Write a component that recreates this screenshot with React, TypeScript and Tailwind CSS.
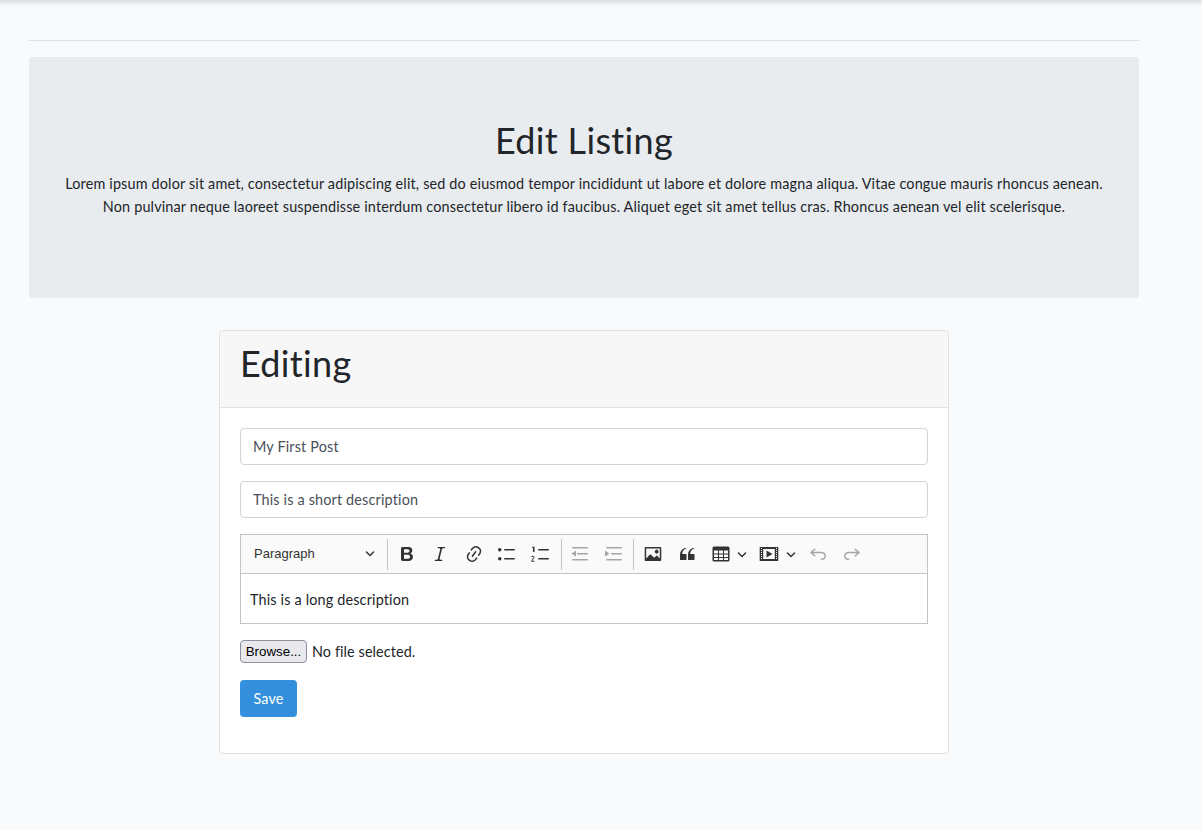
import React from 'react';

const Icon: React.FC<{ d: string; className?: string }> = ({ d, className = 'text-[#333]' }) => (
  <svg viewBox="0 0 20 20" className={`w-5 h-5 fill-current ${className}`}>
    <path d={d} />
  </svg>
);

const Chevron: React.FC = () => (
  <svg viewBox="0 0 10 10" className="w-[10px] h-[10px] fill-current text-[#333]">
    <path d="M.941 4.523a.75.75 0 1 1 1.06-1.06l3.006 3.005 3.005-3.005a.75.75 0 1 1 1.06 1.06l-3.549 3.55a.75.75 0 0 1-1.061 0L.941 4.523z" />
  </svg>
);

const Sep: React.FC<{ className?: string }> = ({ className = 'ml-[3px] mr-[2px]' }) => (
  <span className={`w-px h-[31px] bg-[#c4c4c4] ${className}`} />
);

const Btn: React.FC<{ children: React.ReactNode }> = ({ children }) => (
  <button className="h-[30px] w-[30px] mx-[1.75px] flex items-center justify-center">{children}</button>
);

// button with a dropdown arrow (table, media)
const DropBtn: React.FC<{ children: React.ReactNode; className: string }> = ({ children, className }) => (
  <button className={`h-[30px] mx-[1.75px] flex items-center ${className}`}>
    {children}
    <Chevron />
  </button>
);

const icons = {
  bold: 'M10.187 17H5.773c-.637 0-1.092-.138-1.364-.415-.273-.277-.409-.718-.409-1.323V4.738c0-.617.14-1.062.419-1.332.279-.27.73-.406 1.354-.406h4.68c.69 0 1.288.041 1.793.124.506.083.96.242 1.36.478.341.197.644.447.906.75a3.262 3.262 0 0 1 .808 2.162c0 1.401-.722 2.426-2.167 3.075C15.05 10.175 16 11.315 16 13.01a3.756 3.756 0 0 1-2.296 3.504 6.1 6.1 0 0 1-1.517.377c-.571.073-1.238.11-2 .11zm-.217-6.217H7v4.087h3.069c1.977 0 2.965-.69 2.965-2.072 0-.707-.256-1.22-.768-1.537-.512-.319-1.277-.478-2.296-.478zM7 5.13v3.619h2.606c.729 0 1.292-.067 1.69-.2a1.6 1.6 0 0 0 .91-.765c.165-.267.247-.566.247-.897 0-.707-.26-1.176-.778-1.409-.519-.232-1.31-.348-2.375-.348H7z',
  italic: 'm9.586 14.633.021.004c-.036.335.095.655.393.962.082.083.173.15.274.201h1.474a.6.6 0 1 1 0 1.2H5.304a.6.6 0 0 1 0-1.2h1.15c.474-.07.809-.182 1.005-.334.157-.122.291-.32.404-.597l2.416-9.55a1.053 1.053 0 0 0-.281-.823 1.12 1.12 0 0 0-.442-.296H8.15a.6.6 0 0 1 0-1.2h6.443a.6.6 0 1 1 0 1.2h-1.195c-.376.056-.65.155-.823.296-.215.175-.423.439-.623.79l-2.366 9.347z',
  link: 'm11.077 15 .991-1.416a.75.75 0 1 1 1.229.86l-1.148 1.64a.748.748 0 0 1-.217.206 5.251 5.251 0 0 1-8.503-5.955.741.741 0 0 1 .12-.274l1.147-1.639a.75.75 0 1 1 1.228.86L4.933 10.7l.006.003a3.75 3.75 0 0 0 6.132 4.294l.006.004zm5.494-5.335a.748.748 0 0 1-.12.274l-1.147 1.639a.75.75 0 1 1-1.228-.86l.86-1.23a3.75 3.75 0 0 0-6.144-4.301l-.86 1.229a.75.75 0 0 1-1.229-.86l1.148-1.64a.748.748 0 0 1 .217-.206 5.251 5.251 0 0 1 8.503 5.955zm-4.563-2.532a.75.75 0 0 1 .184 1.045l-3.155 4.505a.75.75 0 1 1-1.229-.86l3.155-4.506a.75.75 0 0 1 1.045-.184z',
  bullets: 'M7 5.75c0 .414.336.75.75.75h9.5a.75.75 0 1 0 0-1.5h-9.5a.75.75 0 0 0-.75.75zm-6 0C1 4.784 1.777 4 2.75 4c.966 0 1.75.777 1.75 1.75 0 .966-.777 1.75-1.75 1.75C1.784 7.5 1 6.723 1 5.75zm6 9c0 .414.336.75.75.75h9.5a.75.75 0 1 0 0-1.5h-9.5a.75.75 0 0 0-.75.75zm-6 0c0-.966.777-1.75 1.75-1.75.966 0 1.75.777 1.75 1.75 0 .966-.777 1.75-1.75 1.75-.966 0-1.75-.777-1.75-1.75z',
  numbers: 'M7 5.75c0 .414.336.75.75.75h9.5a.75.75 0 1 0 0-1.5h-9.5a.75.75 0 0 0-.75.75zM3.5 3v5H2V3.7H1v-1h2.5V3zM.343 17.857l2.59-3.257c2.02-2.523-1.93-4.272-2.76-1.5h1.47c.32-.6 1.3-.183 1 .457L.34 16.5v1.357H3.5v-1H.343zm6.657-3.107c0 .414.336.75.75.75h9.5a.75.75 0 1 0 0-1.5h-9.5a.75.75 0 0 0-.75.75z',
  outdent: 'M2 3.75c0 .414.336.75.75.75h14.5a.75.75 0 1 0 0-1.5H2.75a.75.75 0 0 0-.75.75zm5 6c0 .414.336.75.75.75h9.5a.75.75 0 1 0 0-1.5h-9.5a.75.75 0 0 0-.75.75zM2.75 16.5h14.5a.75.75 0 1 0 0-1.5H2.75a.75.75 0 1 0 0 1.5zM5.388 6.95 2 9.358a.4.4 0 0 0 .013.661l3.39 2.207A.4.4 0 0 0 6 11.892V7.275a.4.4 0 0 0-.612-.326z',
  indent: 'M2 3.75c0 .414.336.75.75.75h14.5a.75.75 0 1 0 0-1.5H2.75a.75.75 0 0 0-.75.75zm5 6c0 .414.336.75.75.75h9.5a.75.75 0 1 0 0-1.5h-9.5a.75.75 0 0 0-.75.75zM2.75 16.5h14.5a.75.75 0 1 0 0-1.5H2.75a.75.75 0 1 0 0 1.5zM1.632 6.95 5.02 9.358a.4.4 0 0 1-.013.661l-3.39 2.207A.4.4 0 0 1 1 11.892V7.275a.4.4 0 0 1 .632-.326z',
  image: 'M6.91 10.54c.26-.23.64-.21.88.03l3.36 3.14 2.23-2.06a.64.64 0 0 1 .87 0l2.52 2.97V4.5H3.2v10.12l3.71-4.08zm10.27-7.51c.6 0 1.09.47 1.09 1.05v11.84c0 .59-.49 1.06-1.09 1.06H2.79c-.6 0-1.09-.47-1.09-1.06V4.08c0-.58.49-1.05 1.1-1.05h14.38zm-5.22 5.56a1.96 1.96 0 1 1 3.4-1.96 1.96 1.96 0 0 1-3.4 1.96z',
  quote: 'M3 10.423a6.5 6.5 0 0 1 6.056-6.408l.038.67C6.448 5.423 5.354 7.663 5.22 10H9c.552 0 .5.432.5.986v4.511c0 .554-.448.503-1 .503h-5c-.552 0-.5-.449-.5-1.003v-4.574zm8 0a6.5 6.5 0 0 1 6.056-6.408l.038.67c-2.646.739-3.74 2.979-3.873 5.315H17c.552 0 .5.432.5.986v4.511c0 .554-.448.503-1 .503h-5c-.552 0-.5-.449-.5-1.003v-4.574z',
  table: 'M3 2.5h14A1.5 1.5 0 0 1 18.5 4v12a1.5 1.5 0 0 1-1.5 1.5H3A1.5 1.5 0 0 1 1.5 16V4A1.5 1.5 0 0 1 3 2.5zM3 6.5v3h4v-3H3zm5 0v3h4v-3H8zm5 0v3h4v-3h-4zM3 10.5v2.5h4v-2.5H3zm5 0v2.5h4v-2.5H8zm5 0v2.5h4v-2.5h-4zM3 14v2h4v-2H3zm5 0v2h4v-2H8zm5 0v2h4v-2h-4z',
  media: 'M18.68 3.03c.6 0 .59-.03.59.55v12.84c0 .59.01.55-.59.55H1.29c-.6 0-.59.04-.59-.55V3.58c0-.58-.01-.55.6-.55h17.38zM15.77 15V5H4.2v10h11.57zM2 4v1h1V4H2zm0 2v1h1V6H2zm0 2v1h1V8H2zm0 2v1h1v-1H2zm0 2v1h1v-1H2zm0 2v1h1v-1H2zm15-10v1h1V4h-1zm0 2v1h1V6h-1zm0 2v1h1V8h-1zm0 2v1h1v-1h-1zm0 2v1h1v-1h-1zm0 2v1h1v-1h-1zM7.5 6.5l6 3.5-6 3.5v-7z',
  undo: 'm5.042 9.367 2.189 1.837a.75.75 0 0 1-.965 1.149l-3.788-3.18a.747.747 0 0 1-.21-.284.75.75 0 0 1 .17-.945L6.23 4.762a.75.75 0 1 1 .964 1.15L4.863 7.866h8.917A.75.75 0 0 1 14 7.9a4 4 0 1 1-1.477 7.718l.344-1.489a2.5 2.5 0 1 0 1.094-4.73l.008-.032H5.042z',
  redo: 'm14.958 9.367-2.189 1.837a.75.75 0 0 0 .965 1.149l3.788-3.18a.747.747 0 0 0 .21-.284.75.75 0 0 0-.17-.945L13.77 4.762a.75.75 0 1 0-.964 1.15l2.331 1.955H6.22A.75.75 0 0 0 6 7.9a4 4 0 1 0 1.477 7.718l-.344-1.489A2.5 2.5 0 1 1 6.039 9.4l-.008-.032h8.927z',
};

const App: React.FC = () => {
  return (
    <div className="min-h-[830px] bg-[#f8fafc] font-['Lato',sans-serif] text-[14.4px] leading-[23px] tracking-[0.165px] text-[#212529] overflow-hidden">
      {/* top navbar shadow */}
      <div className="h-0 shadow-[0_0_5px_2px_rgba(0,0,0,0.18)]" />

      <div className="w-[1110px] ml-[29px] pt-10">
        <div className="border-t border-[#dfe1e3]" />

        {/* Jumbotron */}
        <div className="mt-4 h-[241px] rounded-[4px] bg-[#e9ecef] flex flex-col items-center pt-[62px] text-center">
          <h1 className="text-[36px] leading-[43px] tracking-[0.33px] mb-[10px]">Edit Listing</h1>
          <p>
            Lorem ipsum dolor sit amet, consectetur adipiscing elit, sed do eiusmod tempor incididunt ut labore et dolore magna aliqua. Vitae congue mauris rhoncus aenean.
            <br />
            Non pulvinar neque laoreet suspendisse interdum consectetur libero id faucibus. Aliquet eget sit amet tellus cras. Rhoncus aenean vel elit scelerisque.
          </p>
        </div>

        {/* Card */}
        <div className="mt-8 ml-[190px] w-[730px] h-[424px] bg-white border border-[#dfe0e1] rounded-[4px]">
          <div className="h-[77px] bg-[#f7f7f7] border-b border-[#dfe0e1] rounded-t-[4px] px-5 pt-[11px]">
            <h1 className="text-[36px] leading-[43px] tracking-[0.33px]">Editing</h1>
          </div>

          <div className="px-5 pt-5">
            <input
              readOnly
              value="My First Post"
              className="block w-full h-[37px] px-3 bg-white border border-[#ced4da] rounded-[4px] text-[#495057]"
            />
            <input
              readOnly
              value="This is a short description"
              className="block w-full h-[37px] mt-4 px-3 bg-white border border-[#ced4da] rounded-[4px] text-[#495057]"
            />

            {/* Editor */}
            <div className="mt-4 border border-[#c4c4c4]">
              <div className="h-[39px] bg-[#fafafa] border-b border-[#c4c4c4] flex items-center pl-[4px]">
                <button className="w-[139px] h-[30px] pb-[2px] flex items-center justify-between pl-[9px] pr-[9px] font-['Liberation_Sans',sans-serif] text-[13px] tracking-normal text-[#333]">
                  Paragraph
                  <Chevron />
                </button>
                <Sep />
                <Btn><Icon d={icons.bold} /></Btn>
                <Btn><Icon d={icons.italic} /></Btn>
                <Btn><Icon d={icons.link} /></Btn>
                <Btn><Icon d={icons.bullets} /></Btn>
                <Btn><Icon d={icons.numbers} /></Btn>
                <Sep />
                <Btn><Icon d={icons.outdent} className="text-[#a6a6a6]" /></Btn>
                <Btn><Icon d={icons.indent} className="text-[#a6a6a6]" /></Btn>
                <Sep className="ml-[2px] mr-[3px]" />
                <Btn><Icon d={icons.image} /></Btn>
                <Btn><Icon d={icons.quote} /></Btn>
                <DropBtn className="pl-[6px] pr-[3px] gap-[6px]"><Icon d={icons.table} /></DropBtn>
                <DropBtn className="pl-[5px] pr-1 gap-[7px]"><Icon d={icons.media} /></DropBtn>
                <Btn><Icon d={icons.undo} className="text-[#a6a6a6]" /></Btn>
                <Btn><Icon d={icons.redo} className="text-[#a6a6a6]" /></Btn>
              </div>
              <div className="h-[49px] bg-white px-[9px] pt-[1px] flex items-center">This is a long description</div>
            </div>

            {/* File picker */}
            <div className="mt-4 h-[23px] flex items-center gap-[5px]">
              <button className="w-[67px] h-[23px] bg-[#e9e9ed] border border-[#8f8f9d] rounded-[4px] font-['Liberation_Sans',sans-serif] text-[13.33px] tracking-normal leading-none text-black">
                Browse...
              </button>
              <span className="tracking-[0.1px]">No file selected.</span>
            </div>

            <button className="mt-[17px] w-[57px] h-[37px] bg-[#3490dc] rounded-[4px] text-white">Save</button>
          </div>
        </div>
      </div>
    </div>
  );
};

export default App;
